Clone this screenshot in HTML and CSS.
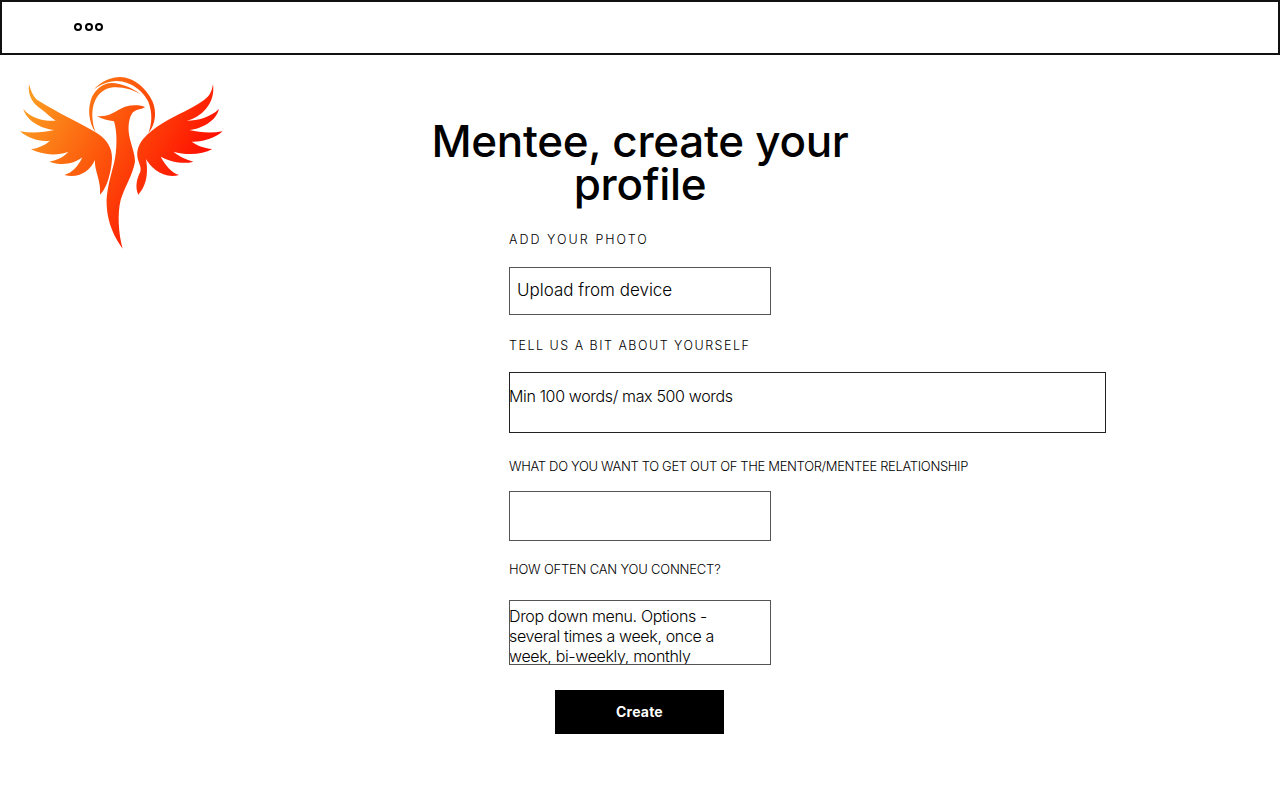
FILE: index.html
```html
<!DOCTYPE html>
<html lang="en">
<head>
<meta charset="utf-8">
<title>Mentee, create your profile</title>
<link rel="stylesheet" href="styles.css">
</head>
<body>
<header class="topbar">
  <div class="dots"><span class="dot"></span><span class="dot"></span><span class="dot"></span></div>
</header>
<main class="page">
  <div class="logo-col">
    <svg class="logo" width="240" height="200" viewBox="0 0 720 600" aria-label="Phoenix logo">
      <defs>
        <linearGradient id="fire" gradientUnits="userSpaceOnUse" x1="90" y1="130" x2="560" y2="400">
          <stop offset="0" stop-color="#fb9a20"/>
          <stop offset="0.45" stop-color="#fd5a0c"/>
          <stop offset="1" stop-color="#ff0d00"/>
        </linearGradient>
      </defs>
      <g fill="url(#fire)">
        <path d="M87 72C82 108 100 132 122 146C138 158 152 172 167 182C135 184 96 178 70 147C80 182 122 206 163 210C130 218 93 220 60 214C85 235 118 246 150 242C135 256 115 264 93 268C130 286 172 288 205 275C190 292 172 300 148 305C185 318 222 312 247 292C235 318 218 338 193 345C232 356 268 337 285 300C282 330 304 362 300 404C322 385 335 330 336 295C337 265 320 238 295 222C240 188 175 160 112 120C100 110 92 92 87 72Z"/>
        <path d="M639 72C635 96 630 106 612 120C575 148 530 163 490 188C465 203 445 218 430 236C412 258 408 280 415 302C419 315 424 322 421 335C411 355 404 380 415 404C431 385 448 355 438 297C452 322 490 358 537 345C515 338 495 315 482 290C510 305 550 314 580 305C555 298 535 288 520 275C560 286 607 284 637 267C610 264 590 256 575 245C610 246 647 234 668 214C635 220 600 218 568 210C605 206 647 185 657 147C630 172 595 182 560 182C605 172 647 130 639 72Z"/>
        <path d="M435 142C425 135 400 135 385 138C365 141 345 158 325 165C312 169 300 169 290 168C305 178 325 181 342 184C352 215 352 270 342 310C332 350 318 395 320 435C322 490 345 535 368 566C355 520 352 460 362 420C372 385 398 345 405 305C405 275 390 250 386 215C384 190 390 165 400 156C410 148 425 148 435 142Z"/>
        <path d="M280 90C305 62 335 51 360 51C400 51 440 85 458 125C470 155 468 190 445 220C456 190 458 160 445 125C430 95 395 64 350 63C325 63 300 74 280 90Z"/>
        <path d="M422 103C395 82 365 70 335 69C310 70 290 85 276 110C262 145 265 185 287 218C276 190 272 150 285 122C298 97 315 85 340 82C370 80 400 89 422 103Z"/>
      </g>
    </svg>
  </div>
  <form class="form">
    <h1 class="title">Mentee, create your profile</h1>
    <p class="label label-photo">ADD YOUR PHOTO</p>
    <div class="box box-upload">Upload from device</div>
    <p class="label label-about">TELL US A BIT ABOUT YOURSELF</p>
    <div class="box box-about"><span class="box-text">Min 100 words/ max 500 words</span></div>
    <p class="label label-want">WHAT DO YOU WANT TO GET OUT OF THE MENTOR/MENTEE RELATIONSHIP</p>
    <div class="box box-want"></div>
    <p class="label label-often">HOW OFTEN CAN YOU CONNECT?</p>
    <div class="box box-often"><span class="box-text">Drop down menu. Options - several times a week, once a week, bi-weekly, monthly</span></div>
    <button class="create" type="button">Create</button>
  </form>
</main>
</body>
</html>
```
FILE: styles.css
```css
* { box-sizing: border-box; }
html, body { margin: 0; background: #fff; }
body { font-family: Inter, "Liberation Sans", sans-serif; color: #000; height: 800px; overflow: hidden; }

.topbar { height: 55px; border: 2px solid #111; display: flex; align-items: center; padding: 0 0 1px 72px; }
.dots { display: flex; gap: 2.5px; }
.dot { width: 8px; height: 8px; border: 2px solid #000; border-radius: 50%; }

.page { display: grid; grid-template-columns: 509px 1fr; }
.logo { display: block; margin-top: 5px; }

.form { display: flex; flex-direction: column; align-items: flex-start; }
.title { width: 440px; margin: 65px 0 0 -89px; font-size: 44px; line-height: 43px; font-weight: 500; text-align: center; letter-spacing: -0.3px; }

.label { margin: 0; font-size: 12.5px; line-height: 18px; font-weight: 300; white-space: nowrap; }
.label-photo { margin-top: 25px; letter-spacing: 2.05px; }
.label-about { margin-top: 22px; letter-spacing: 1.5px; }
.label-want { margin-top: 24px; font-size: 13px; letter-spacing: -0.33px; }
.label-often { margin-top: 19px; font-size: 13px; letter-spacing: -0.2px; }

.box { border: 1px solid #555; width: 262px; font-size: 16px; font-weight: 300; line-height: 20px; }
.box-text { display: block; margin-left: -1px; letter-spacing: -0.35px; }
.box-upload { height: 48px; margin-top: 18px; padding: 12px 0 0 7px; font-size: 17px; }
.box-about { width: 597px; height: 61px; margin-top: 17px; border-color: #222; padding-top: 13px; }
.box-want { height: 50px; margin-top: 16px; }
.box-often { height: 65px; margin-top: 22px; padding: 5px 30px 0 0; overflow: hidden; }

.create { width: 169px; height: 44px; margin: 25px 0 0 46px; padding: 0 0 2px; border: 0; background: #000; color: #fff; font: 700 14px Inter, "Liberation Sans", sans-serif; letter-spacing: 0.2px; }
```
